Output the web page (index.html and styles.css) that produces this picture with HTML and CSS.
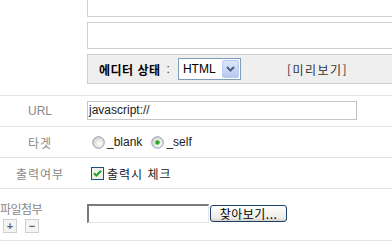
FILE: index.html
```html
<!DOCTYPE html>
<html lang="ko">
<head>
<meta charset="utf-8">
<link rel="stylesheet" href="styles.css">
</head>
<body>
<div class="page">
  <div class="editor-row">
    <div class="label-col"></div>
    <div class="editor">
      <div class="box box-top"></div>
      <div class="box box-mid"></div>
      <div class="toolbar">
        <span class="tb-label">에디터 상태</span>
        <span class="tb-colon">:</span>
        <span class="select"><span class="select-text">HTML</span><span class="select-btn"><svg width="11" height="8" viewBox="0 0 11 8"><path d="M2 2 L5.5 5.5 L9 2" fill="none" stroke="#4d6185" stroke-width="2"/></svg></span></span>
        <span class="preview">[미리보기]</span>
      </div>
    </div>
  </div>

  <div class="row row-url">
    <div class="label">URL</div>
    <div class="field"><div class="text-input">javascript://</div></div>
  </div>

  <div class="row row-target">
    <div class="label">타겟</div>
    <div class="field radios">
      <span class="radio"><svg width="13" height="13" viewBox="0 0 13 13"><defs><radialGradient id="rg1" cx="0.6" cy="0.6" r="0.6"><stop offset="0" stop-color="#ffffff"/><stop offset="1" stop-color="#d6d3c8"/></radialGradient></defs><circle cx="6.5" cy="6.5" r="5.8" fill="url(#rg1)" stroke="#8da0b8" stroke-width="1"/></svg></span>
      <span class="opt">_blank</span>
      <span class="radio radio2"><svg width="13" height="13" viewBox="0 0 13 13"><defs><radialGradient id="rg2" cx="0.6" cy="0.6" r="0.6"><stop offset="0" stop-color="#ffffff"/><stop offset="1" stop-color="#d6d3c8"/></radialGradient></defs><circle cx="6.5" cy="6.5" r="5.8" fill="url(#rg2)" stroke="#8da0b8" stroke-width="1"/><circle cx="6.5" cy="6.5" r="2.2" fill="#2ea22e"/></svg></span>
      <span class="opt">_self</span>
    </div>
  </div>

  <div class="row row-output">
    <div class="label">출력여부</div>
    <div class="field">
      <span class="checkbox"><svg width="13" height="13" viewBox="0 0 13 13"><rect x="0.5" y="0.5" width="12" height="12" fill="#f0f0ea" stroke="#1c5180"/><path d="M3 6.3 L5.3 8.6 L10 3.8" fill="none" stroke="#21a121" stroke-width="2"/></svg></span>
      <span class="opt ko">출력시 체크</span>
    </div>
  </div>

  <div class="row row-file">
    <div class="label label-file">
      <div class="file-title">파일첨부</div>
      <div class="pm">
        <span class="pm-btn">+</span>
        <span class="pm-btn pm-minus">−</span>
      </div>
    </div>
    <div class="field file-field">
      <span class="file-input"></span>
      <span class="file-btn">찾아보기...</span>
    </div>
  </div>
</div>
</body>
</html>
```

FILE: styles.css
```css
html, body {
  margin: 0;
  padding: 0;
  background: #ffffff;
  overflow: hidden;
}
body {
  width: 392px;
  height: 250px;
  font-family: "Liberation Sans", "Noto Sans CJK KR", sans-serif;
  font-size: 12px;
  color: #333333;
}
.page {
  width: 392px;
  overflow: hidden;
}
.editor-row {
  display: flex;
  height: 95px;
}
.label-col {
  width: 87px;
  flex: none;
}
.editor {
  width: 330px;
  flex: none;
}
.box {
  border: 1px solid #cfcfcf;
  background: #ffffff;
}
.box-top {
  border-top: none;
  height: 17px;
  box-sizing: border-box;
}
.box-mid {
  margin-top: 5px;
  height: 27px;
  box-sizing: border-box;
}
.toolbar {
  margin-top: 5px;
  height: 30px;
  box-sizing: border-box;
  border: 1px solid #cfcfcf;
  background: #efefef;
  display: flex;
  align-items: center;
  padding-left: 11px;
}
.tb-label {
  font-weight: bold;
  color: #000000;
  font-size: 12px;
  letter-spacing: 0.5px;
  font-family: "Noto Sans CJK KR", sans-serif;
}
.tb-colon {
  margin-left: 6px;
  color: #333;
}
.select {
  margin-left: 8px;
  width: 63px;
  height: 22px;
  box-sizing: border-box;
  border: 1px solid #7f9db9;
  background: #ffffff;
  display: flex;
  align-items: center;
  justify-content: space-between;
  padding: 1px;
}
.select-text {
  padding-left: 3px;
  color: #000;
  font-size: 12px;
}
.select-btn {
  width: 17px;
  height: 18px;
  box-sizing: border-box;
  border: 1px solid #b9c9ef;
  border-radius: 2px;
  background: linear-gradient(#dde7fb, #b7c8f0);
  display: flex;
  align-items: center;
  justify-content: center;
}
.preview {
  margin-left: 46px;
  color: #333333;
  letter-spacing: 1.5px;
  font-family: "Noto Sans CJK KR", sans-serif;
}
.row {
  display: flex;
  border-top: 1px solid #e3e3e3;
  height: 31px;
  box-sizing: border-box;
}
.label {
  width: 80px;
  flex: none;
  text-align: center;
  color: #888888;
  display: flex;
  align-items: center;
  justify-content: center;
  font-family: "Noto Sans CJK KR", "Liberation Sans", sans-serif;
  letter-spacing: 1px;
}
.row-url .label {
  font-family: "Liberation Sans", sans-serif;
  letter-spacing: 0;
}
.field {
  padding-left: 7px;
  display: flex;
  align-items: center;
}
.row-url .field {
  align-items: flex-start;
  padding-top: 5px;
}
.text-input {
  width: 270px;
  height: 19px;
  box-sizing: border-box;
  border: 1px solid #c4c4c4;
  padding-left: 1px;
  line-height: 17px;
  color: #222;
}
.radio {
  width: 13px;
  height: 13px;
  margin-left: 5px;
  display: flex;
}
.radio2 {
  margin-left: 9px;
}
.opt {
  margin-left: 2px;
  color: #222222;
  font-family: "Liberation Sans", "Noto Sans CJK KR", sans-serif;
}
.opt.ko {
  font-family: "Noto Sans CJK KR", sans-serif;
  letter-spacing: 1px;
}
.checkbox {
  width: 13px;
  height: 13px;
  margin-left: 4px;
  display: flex;
}
.row-output .opt {
  margin-left: 3px;
}
.row-file {
  height: 53px;
  border-bottom: 1px solid #e3e3e3;
}
.label-file {
  display: block;
  text-align: left;
  padding-top: 11px;
}
.file-title {
  font-size: 12px;
  letter-spacing: -0.5px;
}
.pm {
  display: flex;
  margin-top: 2px;
  margin-left: 3px;
  gap: 8px;
}
.pm-btn {
  width: 12px;
  height: 12px;
  border: 1px solid #cfcfcf;
  background: #f4f4f4;
  color: #666;
  font-size: 11px;
  line-height: 12px;
  text-align: center;
  font-weight: bold;
  letter-spacing: 0;
  font-family: "Liberation Sans", sans-serif;
}
.file-field {
  align-items: flex-start;
  padding-top: 15px;
}
.file-input {
  width: 122px;
  height: 19px;
  box-sizing: border-box;
  border-top: 2px solid #7a7a7a;
  border-left: 2px solid #7a7a7a;
  border-right: 1px solid #e5e5e5;
  border-bottom: 1px solid #e5e5e5;
  background: #fff;
}
.file-btn {
  margin-left: 1px;
  margin-top: 1px;
  width: 77px;
  height: 17px;
  box-sizing: border-box;
  border: 1px solid #1c3e6a;
  border-radius: 3px;
  background: linear-gradient(#ffffff, #ecebe6 80%, #d6d0c5);
  color: #000;
  text-align: center;
  line-height: 15px;
  letter-spacing: 0.5px;
  font-family: "Noto Sans CJK KR", sans-serif;
  font-size: 12px;
}
```
